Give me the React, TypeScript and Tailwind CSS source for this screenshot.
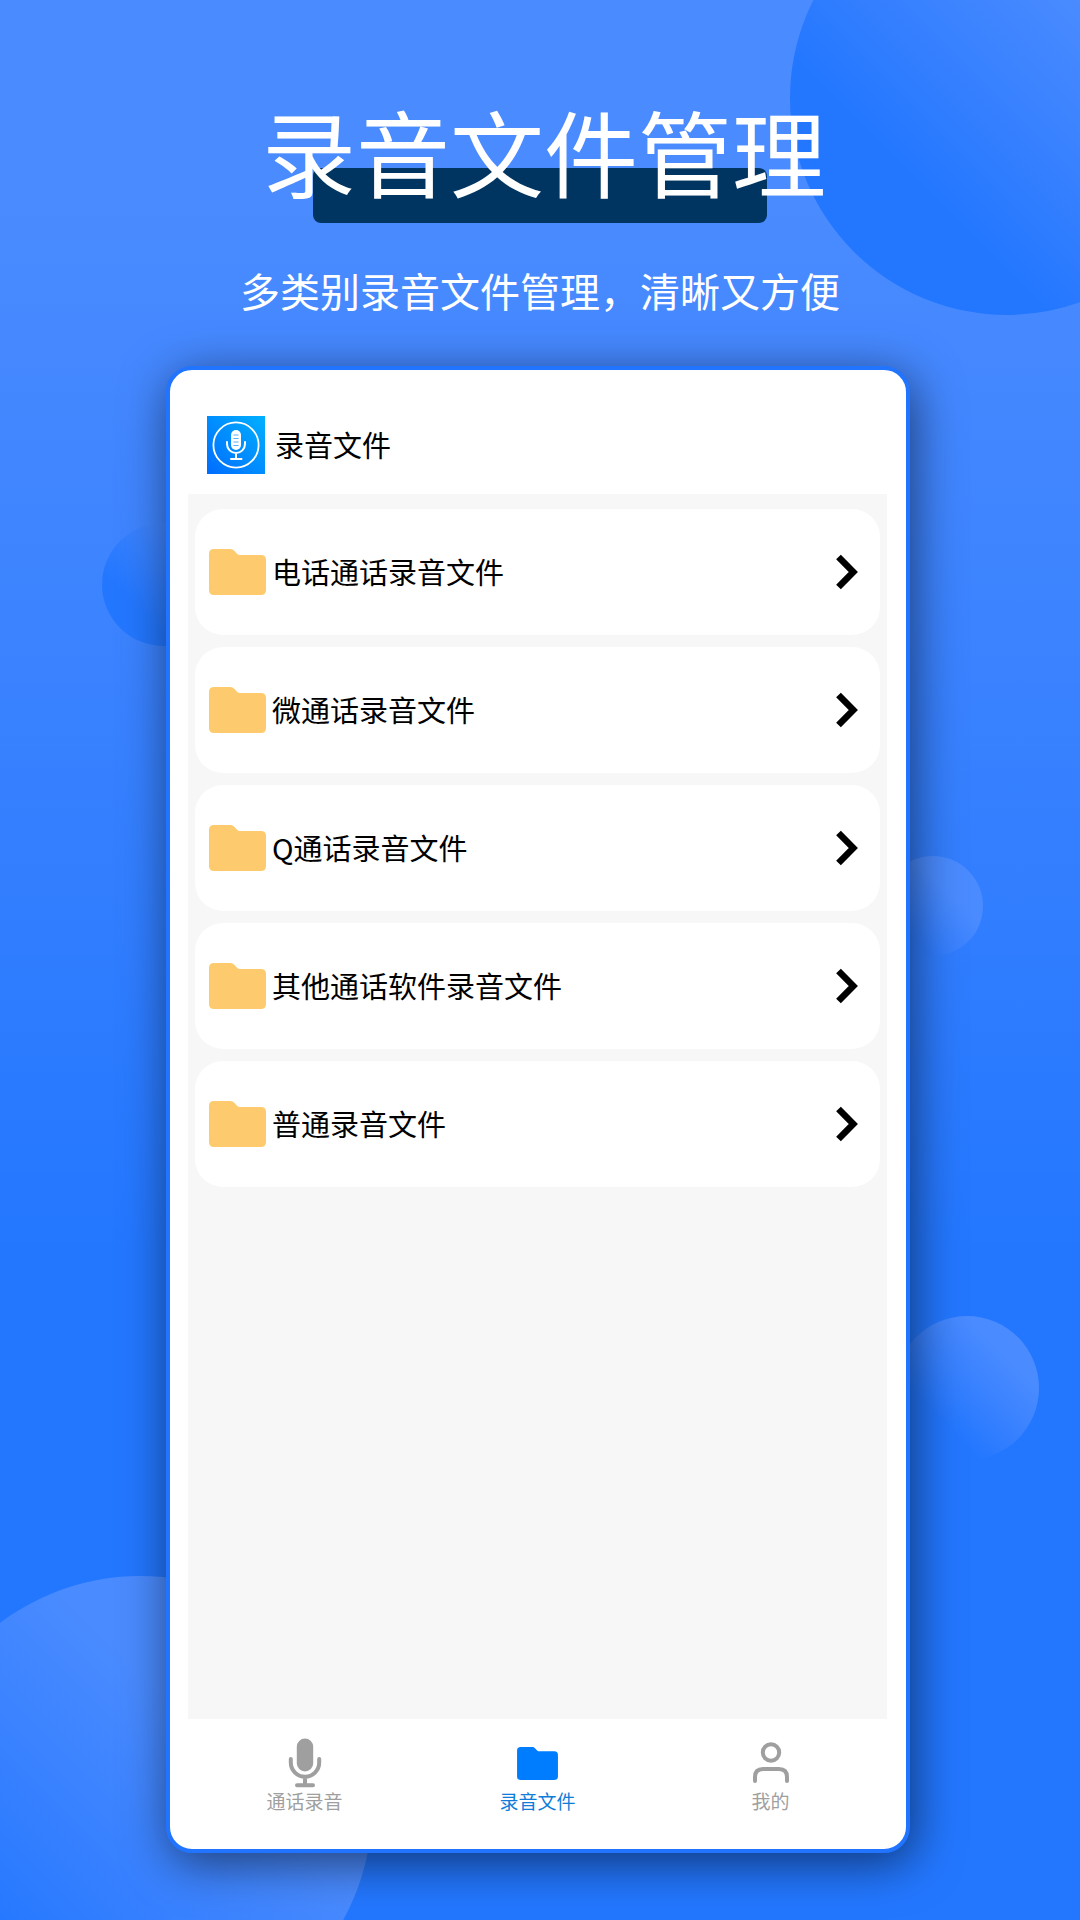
import React from 'react';

interface Folder {
  id: string;
  name: string;
}

interface Tab {
  id: string;
  label: string;
  icon: React.ReactNode;
}

const folders: Folder[] = [
  { id: 'phone', name: '电话通话录音文件' },
  { id: 'wechat', name: '微通话录音文件' },
  { id: 'qq', name: 'Q通话录音文件' },
  { id: 'other', name: '其他通话软件录音文件' },
  { id: 'normal', name: '普通录音文件' },
];

const FolderIcon: React.FC<{ className: string }> = ({ className }) => (
  <svg viewBox="0 0 57 46" className={className} fill="currentColor" aria-hidden="true">
    <path d="M5 0H21.5Q23.5 0 25 1.6L28 4.8Q29.3 6 31 6H52Q57 6 57 11V41Q57 46 52 46H5Q0 46 0 41V5Q0 0 5 0Z" />
  </svg>
);

const ChevronIcon: React.FC = () => (
  <svg viewBox="0 0 22 36" className="h-9 w-[22px]" fill="none" stroke="currentColor" strokeWidth="6.6" aria-hidden="true">
    <path d="M2.5 3L17.3 18L2.5 33" />
  </svg>
);

const MicIcon: React.FC = () => (
  <svg viewBox="0 0 34 50" className="h-[50px] w-[34px]" aria-hidden="true">
    <rect x="8.8" y="0.5" width="16.4" height="33" rx="8.2" fill="currentColor" />
    <path
      d="M2.8 21V24.5A14.2 14.2 0 0 0 31.2 24.5V21M17 39V47M9 47.2H25"
      fill="none"
      stroke="currentColor"
      strokeWidth="4"
      strokeLinecap="round"
    />
  </svg>
);

const UserIcon: React.FC = () => (
  <svg viewBox="0 0 38 42" className="h-[42px] w-[38px]" fill="none" stroke="currentColor" strokeWidth="4" aria-hidden="true">
    <circle cx="19" cy="10.5" r="8.2" />
    <path d="M3 39V35Q3 27 11 27H27Q35 27 35 35V39" strokeLinecap="round" />
  </svg>
);

const AppLogo: React.FC = () => (
  <svg viewBox="0 0 58 58" className="size-[58px]" aria-hidden="true">
    <defs>
      <linearGradient id="logo-bg" x1="0" y1="1" x2="1" y2="0">
        <stop offset="0" stopColor="#006cff" />
        <stop offset="1" stopColor="#00b0ff" />
      </linearGradient>
    </defs>
    <rect width="58" height="58" fill="url(#logo-bg)" />
    <circle cx="29" cy="29" r="22.6" fill="none" stroke="#fff" strokeWidth="1.8" />
    <rect x="24" y="14" width="10" height="20" rx="5" fill="#fff" />
    <path d="M26.5 19H31.5M26.5 22.5H31.5M26.5 26H31.5M26.5 29.5H31.5" stroke="#0a8dff" strokeWidth="0.7" />
    <path
      d="M20 26V28A9 9 0 0 0 38 28V26M29 37V43M24 43H34.5"
      fill="none"
      stroke="#fff"
      strokeWidth="2"
      strokeLinecap="round"
    />
  </svg>
);

const tabs: Tab[] = [
  { id: 'record', label: '通话录音', icon: <MicIcon /> },
  { id: 'files', label: '录音文件', icon: <FolderIcon className="h-[33px] w-[41px] text-[#007dff]" /> },
  { id: 'mine', label: '我的', icon: <UserIcon /> },
];

// Soft circles floating behind the phone
const Backdrop: React.FC = () => (
  <div className="pointer-events-none absolute inset-0 overflow-hidden" aria-hidden="true">
    <div className="absolute -top-[119px] -right-[144px] size-[434px] rounded-full bg-linear-to-tr from-[#2377ff] from-30% to-[#4a8bff] to-70%" />
    <div className="absolute top-[523px] left-[102px] size-[123px] rounded-full bg-linear-to-tr from-[#2377ff] from-30% to-[#4a8bff] to-90%" />
    <div className="absolute top-[856px] right-[97px] size-[100px] rounded-full bg-linear-to-tr from-[#2f7cff] from-25% to-[#4a8bff] to-65%" />
    <div className="absolute top-[1316px] right-[41px] size-[144px] rounded-full bg-linear-to-tr from-[#2377ff] from-30% to-[#4a8bff] to-75%" />
    <div className="absolute top-[1576px] -left-[92px] size-[464px] rounded-full bg-linear-to-tr from-[#2377ff] from-20% to-[#4a8bff] to-65%" />
  </div>
);

const FolderList: React.FC<{ items: Folder[] }> = ({ items }) => (
  <ul className="flex flex-col gap-3">
    {items.map((folder) => (
      <li key={folder.id}>
        <button
          type="button"
          className="flex h-[126px] w-full items-center gap-[6px] rounded-[28px] bg-white pr-[22px] pl-[14px] text-left"
        >
          <FolderIcon className="h-[46px] w-[57px] shrink-0 text-[#fdca6d]" />
          <span className="flex-1 pb-[2px] text-[29px] leading-10">{folder.name}</span>
          <ChevronIcon />
        </button>
      </li>
    ))}
  </ul>
);

const TabBar: React.FC<{ active: string }> = ({ active }) => (
  <nav className="grid h-[130px] grid-cols-3 items-start pt-[18px]">
    {tabs.map((tab) => (
      <button
        key={tab.id}
        type="button"
        className={`flex flex-col items-center ${tab.id === active ? 'text-[#0f7dd8]' : 'text-[#9f9f9f]'}`}
      >
        <span className="flex h-[52px] items-center">{tab.icon}</span>
        <span className="text-[19px] leading-6">{tab.label}</span>
      </button>
    ))}
  </nav>
);

const App: React.FC = () => {
  return (
    <div className="relative flex min-h-screen flex-col bg-linear-to-b from-[#4a8bff] from-10% to-[#2377ff] to-65% pt-[100px] pb-[67px] font-['Noto_Sans_CJK_SC',sans-serif] text-black">
      <Backdrop />

      <header className="relative text-center text-white">
        <div className="absolute top-[68px] left-1/2 h-[55px] w-[454px] -translate-x-1/2 rounded-lg bg-[#003561]" />
        <h1 className="relative pl-2 text-[94px] leading-[100px] whitespace-nowrap">录音文件管理</h1>
        <p className="mt-[66px] text-[40px] leading-[48px] whitespace-nowrap">多类别录音文件管理，清晰又方便</p>
      </header>

      <main className="relative mt-[52px] mr-[170px] ml-[166px] flex flex-1 flex-col rounded-[26px] border-4 border-[#2174ff] bg-white pr-[19px] pl-[18px] shadow-[4px_10px_48px_rgba(0,0,0,0.55)]">
        <div className="flex items-center gap-[10px] pt-[46px] pb-5 pl-[19px]">
          <AppLogo />
          <h2 className="pb-[2px] text-[29px] leading-10">录音文件</h2>
        </div>
        <section className="flex-1 bg-[#f7f7f7] px-[7px] pt-[15px] pb-[15px]">
          <FolderList items={folders} />
        </section>
        <TabBar active="files" />
      </main>
    </div>
  );
};

export default App;
